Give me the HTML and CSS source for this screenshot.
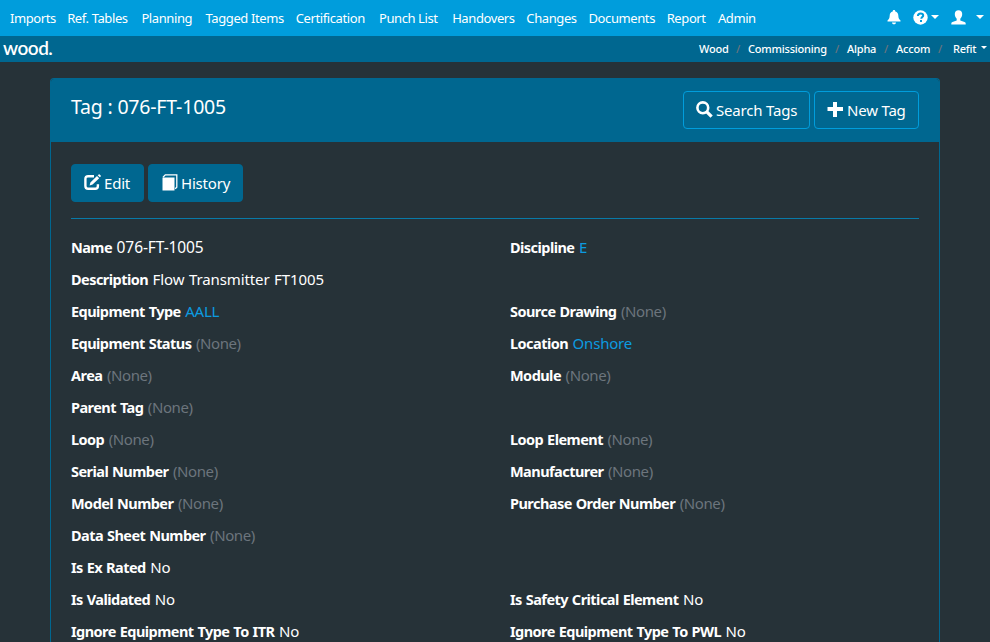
FILE: index.html
```html
<!DOCTYPE html>
<html lang="en">
<head>
<meta charset="utf-8">
<title>Tag : 076-FT-1005</title>
<link rel="stylesheet" href="styles.css">
</head>
<body>
<nav class="topbar">
  <div class="menu">
    <a class="w-45">Imports</a><a class="w-62">Ref. Tables</a><a class="w-52">Planning</a><a class="w-78">Tagged Items</a><a class="w-71">Certification</a><a class="w-61">Punch List</a><a class="w-62">Handovers</a><a class="w-50">Changes</a><a class="w-66">Documents</a><a class="w-39">Report</a><a class="w-39">Admin</a>
  </div>
  <div class="tools">
    <svg class="bell" width="14" height="15" viewBox="0 0 14 15"><path d="M7 0c1 0 1.300.7 1.300 1.500C10.300 2 11.200 3.500 11.300 5.500c.1 2.500.7 3.500 2.200 5v1H.5v-1C2 9 2.600 8 2.700 5.500 2.800 3.500 3.700 2 5.700 1.500 5.700.7 6 0 7 0zM5 12.500h4c0 1-.8 1.800-2 1.800s-2-.8-2-1.800z"/></svg>
    <svg class="help" width="15" height="15" viewBox="0 0 15 15"><circle cx="7.500" cy="7.500" r="7.200"/><path class="cut" d="M4.900 6c0-1.700 1-2.500 2.700-2.500S10.200 4.300 10.200 5.500c0 1.500-1.900 1.700-1.900 3.300M7 11h2"/></svg>
    <i class="caret"></i>
    <svg class="user" width="15" height="15" viewBox="0 0 15 15"><path d="M7.500.3c2.400 0 3.700 1.600 3.700 3.800 0 2-.8 3.700-1.900 4.700v1.600l4.200 1.700c.8.3 1.200.8 1.200 1.500v.9H.3v-.9c0-.7.4-1.200 1.200-1.500l4.200-1.700V8.800C4.600 7.800 3.800 6.100 3.800 4.100 3.800 1.900 5.100.3 7.500.3z"/></svg>
    <i class="caret"></i>
  </div>
</nav>
<div class="subbar">
  <span class="logo">wood.</span>
  <div class="crumbs"><a class="c1">Wood</a><i>/</i><a class="c2">Commissioning</a><i>/</i><a class="c3">Alpha</a><i>/</i><a class="c4">Accom</a><i>/</i><a class="c5">Refit</a><b class="caret small"></b></div>
</div>
<main class="card">
  <header class="card-head">
    <h1>Tag : 076-FT-1005</h1>
    <div class="actions">
      <a class="btn outline search"><svg width="17" height="17" viewBox="0 0 17 17"><circle class="ring" cx="6.800" cy="6.800" r="5.400"/><path class="handle" d="M10.600 10.600l5 5"/></svg><span>Search Tags</span></a>
      <a class="btn outline new"><svg width="17" height="17" viewBox="0 0 17 17"><path d="M6 1h4v5h6v4h-6v6H6v-6H0.500V6H6z"/></svg><span>New Tag</span></a>
    </div>
  </header>
  <section class="card-body">
    <div class="toolbar">
      <a class="btn edit"><svg width="17" height="17" viewBox="0 0 17 17"><path class="box" d="M10 2.300H4.200Q1.400 2.300 1.400 5v7q0 2.700 2.800 2.700h7q2.700 0 2.700-2.700v-1.800"/><path d="M13 2l2.200 2.200L8.600 10.600l-3 .9.800-3.100zM13.700 1.300l1-.9q.5-.3.900 0l1.100 1.100q.4.500 0 .9l-.9.900z"/></svg><span>Edit</span></a>
      <a class="btn history"><svg width="17" height="17" viewBox="0 0 17 17"><path d="M1.500 3.500h12v13h-12z"/><path class="page" d="M2 3.200L4.300.9h11.500v12.300l-1.600 1.600"/></svg><span>History</span></a>
    </div>
    <div class="fields">
      <p><b>Name</b> <span class="code">076-FT-1005</span></p><p><b>Discipline</b> <a>E</a></p>
      <p class="wide"><b>Description</b> Flow Transmitter FT1005</p>
      <p><b>Equipment Type</b> <a>AALL</a></p><p><b>Source Drawing</b> <em>(None)</em></p>
      <p><b>Equipment Status</b> <em>(None)</em></p><p><b>Location</b> <a>Onshore</a></p>
      <p><b>Area</b> <em>(None)</em></p><p><b>Module</b> <em>(None)</em></p>
      <p class="wide"><b>Parent Tag</b> <em>(None)</em></p>
      <p><b>Loop</b> <em>(None)</em></p><p><b>Loop Element</b> <em>(None)</em></p>
      <p><b>Serial Number</b> <em>(None)</em></p><p><b>Manufacturer</b> <em>(None)</em></p>
      <p><b>Model Number</b> <em>(None)</em></p><p><b>Purchase Order Number</b> <em>(None)</em></p>
      <p class="wide"><b>Data Sheet Number</b> <em>(None)</em></p>
      <p class="wide"><b>Is Ex Rated</b> No</p>
      <p><b>Is Validated</b> No</p><p><b>Is Safety Critical Element</b> No</p>
      <p><b>Ignore Equipment Type To ITR</b> No</p><p><b>Ignore Equipment Type To PWL</b> No</p>
    </div>
  </section>
</main>
</body>
</html>
```
FILE: styles.css
```css
* { box-sizing: border-box; }
html, body { height: 100%; }
body { margin: 0; overflow: hidden; background: #263238; color: #fff; font: 15px/24px "Noto Sans", "Open Sans", sans-serif; letter-spacing: -.1px; white-space: nowrap; }
svg { fill: #fff; flex: none; display: block; }
.topbar { height: 36px; background: #009ddc; display: flex; justify-content: space-between; padding: 0 6px 0 10px; font-size: 13px; line-height: 36px; letter-spacing: -.4px; }
.menu { display: flex; gap: 12.200px; }
.w-39 { width: 39px; } .w-45 { width: 45px; } .w-50 { width: 50px; } .w-52 { width: 52px; }
.w-61 { width: 61px; } .w-62 { width: 62px; } .w-66 { width: 66px; } .w-71 { width: 71px; } .w-78 { width: 78px; }
.tools { display: flex; align-items: center; padding-bottom: 2px; }
.caret { border: 4px solid transparent; border-top-color: #fff; border-bottom: 0; }
.help { margin: 0 3px 0 12px; }
.user { margin: 0 10px 0 12px; }
.cut { fill: none; stroke: #009ddc; stroke-width: 2; }
.subbar { height: 26px; background: #006790; display: flex; justify-content: space-between; padding: 0 3px; line-height: 26px; }
.logo { font: 600 19px/23px Lato, sans-serif; letter-spacing: -.5px; }
.crumbs { display: flex; align-items: center; font-size: 11px; font-weight: 500; letter-spacing: -.2px; }
.crumbs i { font-style: normal; color: #6c757d; width: 20px; text-align: center; }
.c1, .c3 { width: 29px; } .c2 { width: 79px; } .c4 { width: 34px; } .c5 { width: 25px; margin-left: 3px; }
.caret.small { border-width: 3.500px 3.500px 0; margin: 0 0 3px 3px; }
.card { margin: 16px 50px 0; border: 1px solid #006790; border-bottom: 0; border-radius: 4px 4px 0 0; height: 564px; overflow: hidden; }
.card-head { height: 63px; background: #006790; padding: 12px 20px; display: flex; justify-content: space-between; }
h1 { margin: 4px 0 0; font-size: 19.500px; font-weight: 400; line-height: 24px; letter-spacing: -.200px; }
.actions, .toolbar { display: flex; gap: 4px; }
.btn { height: 38px; border-radius: 4px; border: 1px solid #006790; background: #006790; display: flex; align-items: center; gap: 3px; padding: 0 12px; letter-spacing: -.2px; }
.btn svg { margin-bottom: 2px; }
.outline { border-color: #009ddc; }
.search { width: 127px; } .new { width: 105px; } .edit { width: 73px; } .history { width: 95px; }
.ring, .handle, .box, .page, .cut { fill: none; }
.ring { stroke: #fff; stroke-width: 2.600; } .handle { stroke: #fff; stroke-width: 3.200; }
.box { stroke: #fff; stroke-width: 2.400; } .page { stroke: #fff; stroke-width: 1.300; }
.card-body { padding: 22px 20px; }
.toolbar { padding-bottom: 16px; border-bottom: 1px solid #087aa8; }
.fields { display: grid; grid-template-columns: 439px 1fr; row-gap: 8px; padding-top: 16px; }
.fields p { margin: 0; height: 24px; word-spacing: .7px; }
.fields b { font-size: 14.5px; font-weight: 700; letter-spacing: -.55px; }
.code { font-size: 15.5px; }
.wide { grid-column: 1 / 3; }
.fields em { font-style: normal; color: #6c757d; letter-spacing: -.4px; }
.fields a { color: #0c9be0; letter-spacing: -.2px; }
```
